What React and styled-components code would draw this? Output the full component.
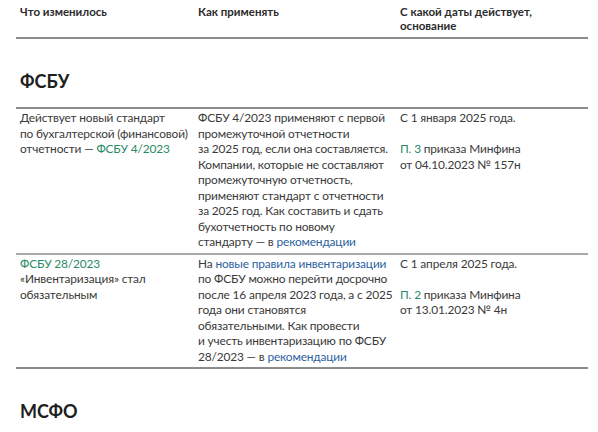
import React from 'react';
import styled, { createGlobalStyle } from 'styled-components';

const GlobalStyle = createGlobalStyle`
  body {
    margin: 0;
    background: #fff;
    font-family: Lato, "Liberation Sans", sans-serif;
    color: #333;
  }
`;

const Page = styled.div`
  padding: 0 10px 0 16px;
`;

const Row = styled.div`
  display: grid;
  grid-template-columns: 178px 202px 1fr;
  border-bottom: 2px solid ${({ $light }) => ($light ? '#a8a8a8' : '#8c8c8c')};
  padding: ${({ $pad }) => $pad || '1px 0 3px'};
`;

const HeadCell = styled.div`
  padding-left: 4px;
  font-size: 11.5px;
  font-weight: 700;
  line-height: 14px;
  color: #2b2b2b;
`;

const Cell = styled.div`
  padding-left: 4px;
  font-size: 11.9px;
  letter-spacing: -0.15px;
  line-height: 15.5px;
  color: #3a3a3a;
  white-space: nowrap;
`;

const Section = styled.h2`
  margin: 0;
  padding: 31px 0 15px 4px;
  font-size: 18px;
  font-weight: 700;
  line-height: 22px;
  color: #1e1e1e;
  border-bottom: ${({ $noLine }) => ($noLine ? 'none' : '2px solid #8c8c8c')};
`;

const Green = styled.span`
  color: #2a8a66;
`;

const Blue = styled.span`
  color: #2c5f9e;
`;

const Gap = styled.div`
  height: 15.5px;
`;

const App = () => (
  <Page>
    <GlobalStyle />
    <Row $pad="5px 0 4px">
      <HeadCell>Что изменилось</HeadCell>
      <HeadCell>Как применять</HeadCell>
      <HeadCell>
        С какой даты действует,
        <br />
        основание
      </HeadCell>
    </Row>

    <Section>ФСБУ</Section>

    <Row $light>
      <Cell>
        Действует новый стандарт<br />
        по бухгалтерской (финансовой)<br />
        отчетности — <Green>ФСБУ 4/2023</Green>
      </Cell>
      <Cell>
        ФСБУ 4/2023 применяют с первой<br />
        промежуточной отчетности<br />
        за 2025 год, если она составляется.<br />
        Компании, которые не составляют<br />
        промежуточную отчетность,<br />
        применяют стандарт с отчетности<br />
        за 2025 год. Как составить и сдать<br />
        бухотчетность по новому<br />
        стандарту — в <Blue>рекомендации</Blue>
      </Cell>
      <Cell>
        С 1 января 2025 года.
        <Gap />
        <Green>П. 3</Green> приказа Минфина<br />
        от 04.10.2023 № 157н
      </Cell>
    </Row>

    <Row>
      <Cell>
        <Green>ФСБУ 28/2023</Green><br />
        «Инвентаризация» стал<br />
        обязательным
      </Cell>
      <Cell>
        На <Blue>новые правила инвентаризации</Blue><br />
        по ФСБУ можно перейти досрочно<br />
        после 16 апреля 2023 года, а с 2025<br />
        года они становятся<br />
        обязательными. Как провести<br />
        и учесть инвентаризацию по ФСБУ<br />
        28/2023 — в <Blue>рекомендации</Blue>
      </Cell>
      <Cell>
        С 1 апреля 2025 года.
        <Gap />
        <Green>П. 2</Green> приказа Минфина<br />
        от 13.01.2023 № 4н
      </Cell>
    </Row>

    <Section $noLine>МСФО</Section>
  </Page>
);

export default App;
